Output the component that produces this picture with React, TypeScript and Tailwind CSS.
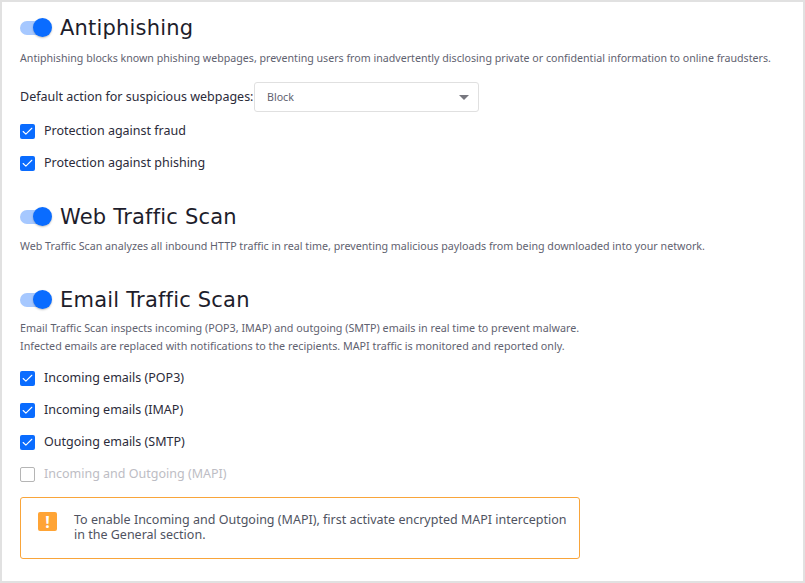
import { Check } from 'lucide-react';

const body = { fontFamily: '"Noto Sans", sans-serif' };

const Toggle = () => (
  <span className="relative block w-8 h-5 shrink-0">
    <span className="absolute left-0 top-[3px] w-[30px] h-[14px] rounded-full bg-[#a6c8ff]" />
    <span className="absolute left-[13px] top-0 w-[19px] h-[19px] rounded-full bg-[#0a6cff] shadow-[0_1px_2px_rgba(0,0,0,0.25)]" />
  </span>
);

const Heading = ({ title }: { title: string }) => (
  <div className="flex items-center gap-2 h-5">
    <Toggle />
    <h2 className="font-['DejaVu_Sans',sans-serif] text-[21px] leading-5 text-[#1d1d2b] tracking-[0.2px]">{title}</h2>
  </div>
);

const Option = ({ label, checked = true }: { label: string; checked?: boolean }) => (
  <div className="flex items-center gap-[9px] h-[16px]">
    {checked ? (
      <span className="flex items-center justify-center w-[15px] h-[15px] rounded-[2px] bg-[#0a6cff]">
        <Check className="w-[13px] h-[13px] text-white" strokeWidth={2} />
      </span>
    ) : (
      <span className="w-[15px] h-[15px] rounded-[2px] border border-[#b5b5b5] bg-white" />
    )}
    <span className={`text-[12.5px] leading-4 ${checked ? 'text-[#2b2b3a]' : 'text-[#bdbdc4]'}`}>{label}</span>
  </div>
);

export default function App() {
  return (
    <div style={body} className="w-[805px] h-[583px] bg-[#e1e1e1] p-[2px] overflow-hidden">
      <div className="w-[801px] h-[579px] bg-white pl-[18px] pt-4">
        <Heading title="Antiphishing" />
        <p className="mt-[12px] text-[10.65px] leading-4 text-[#5f6270]">
          Antiphishing blocks known phishing webpages, preventing users from inadvertently disclosing private or confidential information to online fraudsters.
        </p>
        <div className="mt-4 flex items-center h-[30px]">
          <span className="text-[12.5px] text-[#2b2b3a] w-[234px] shrink-0">Default action for suspicious webpages:</span>
          <div className="w-[225px] h-[30px] flex items-center justify-between pl-3 pr-[9px] pt-px border border-[#e0e0e0] rounded-[3px] text-[10.65px] text-[#5f6270]">
            <span>Block</span>
            <span className="w-0 h-0 border-x-[5px] border-x-transparent border-t-[5px] border-t-[#77777f]" />
          </div>
        </div>
        <div className="mt-[11px] flex flex-col gap-4">
          <Option label="Protection against fraud" />
          <Option label="Protection against phishing" />
        </div>

        <div className="mt-[36px]">
          <Heading title="Web Traffic Scan" />
        </div>
        <p className="mt-[11px] text-[10.7px] leading-4 text-[#5f6270]">
          Web Traffic Scan analyzes all inbound HTTP traffic in real time, preventing malicious payloads from being downloaded into your network.
        </p>

        <div className="mt-[36px]">
          <Heading title="Email Traffic Scan" />
        </div>
        <p className="mt-[9px] text-[10.75px] leading-[18px] text-[#5f6270]">
          Email Traffic Scan inspects incoming (POP3, IMAP) and outgoing (SMTP) emails in real time to prevent malware.
          <br />
          Infected emails are replaced with notifications to the recipients. MAPI traffic is monitored and reported only.
        </p>
        <div className="mt-[15px] flex flex-col gap-4">
          <Option label="Incoming emails (POP3)" />
          <Option label="Incoming emails (IMAP)" />
          <Option label="Outgoing emails (SMTP)" />
          <Option label="Incoming and Outgoing (MAPI)" checked={false} />
        </div>
        <div className="mt-[15px] w-[560px] h-[62px] flex items-start gap-[17px] pl-[17px] pt-[14px] border border-[#f9a53a] rounded-[3px]">
          <span className="flex items-center justify-center w-[19px] h-[19px] rounded-[2px] bg-[#ffa435] text-white text-[16px] leading-none font-bold">!</span>
          <p className="text-[12.5px] leading-[15px] text-[#4f5361]">
            To enable Incoming and Outgoing (MAPI), first activate encrypted MAPI interception
            <br />
            in the General section.
          </p>
        </div>
      </div>
    </div>
  );
}
